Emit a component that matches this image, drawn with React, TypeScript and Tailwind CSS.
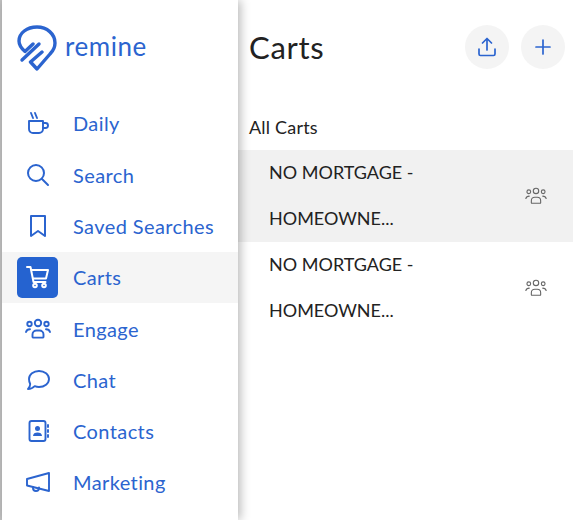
const brand = "#2b64cf";

const Coffee = () => (
  <svg width="26" height="26" viewBox="0 0 26 26" fill="none" stroke="currentColor" strokeWidth="1.9" strokeLinecap="round" strokeLinejoin="round">
    <path d="M4 11h14v8a4 4 0 0 1-4 4H8a4 4 0 0 1-4-4z" />
    <path d="M18 13h2.5a2.5 2.5 0 0 1 2.5 2.5v0a2.5 2.5 0 0 1-2.5 2.5H18" />
    <path d="M8 8 6 3M12 8 10 3" />
  </svg>
);

const Search = () => (
  <svg width="24" height="24" viewBox="0 0 24 24" fill="none" stroke="currentColor" strokeWidth="2" strokeLinecap="round">
    <circle cx="10" cy="10" r="8" />
    <path d="m16 16 6 6" />
  </svg>
);

const Bookmark = () => (
  <svg width="24" height="24" viewBox="0 0 24 24" fill="none" stroke="currentColor" strokeWidth="2" strokeLinejoin="round">
    <path d="M5 2h14v20l-7-5-7 5z" />
  </svg>
);

const Cart = () => (
  <svg width="26" height="26" viewBox="0 0 26 26" fill="none" stroke="currentColor" strokeWidth="2" strokeLinecap="round" strokeLinejoin="round">
    <path d="M2 3h3.5l3 15h12" />
    <path d="M6.5 6H23l-2 8.5H8" />
    <circle cx="10" cy="21.5" r="1.8" />
    <circle cx="19" cy="21.5" r="1.8" />
  </svg>
);

const People = ({ size = 26, width = 1.9 }: { size?: number; width?: number }) => (
  <svg width={size} height={size} viewBox="0 0 26 26" fill="none" stroke="currentColor" strokeWidth={width} strokeLinecap="round" strokeLinejoin="round">
    <circle cx="13" cy="7" r="3.2" />
    <circle cx="4.5" cy="8" r="2.2" />
    <circle cx="21.5" cy="8" r="2.2" />
    <path d="M7.5 21v-2.5a4 4 0 0 1 4-4h3a4 4 0 0 1 4 4V21a.8.8 0 0 1-.8.6H8.3a.8.8 0 0 1-.8-.6z" />
    <path d="M1 16c.5-1.700 2-2.800 4-2.800M25 16c-.5-1.700-2-2.800-4-2.800" />
  </svg>
);

const Chat = () => (
  <svg width="24" height="24" viewBox="0 0 24 24" fill="none" stroke="currentColor" strokeWidth="1.9" strokeLinejoin="round">
    <path d="M13 3c5.500 0 10 3.600 10 8s-4.500 8-10 8c-1.500 0-3-.3-4.300-.8C7 20 4.500 21 2 21c1.300-1.200 2.200-3 2.200-5C3.400 14.500 3 12.800 3 11c0-4.400 4.500-8 10-8z" />
  </svg>
);

const Contacts = () => (
  <svg width="24" height="24" viewBox="0 0 24 24" fill="none" stroke="currentColor" strokeWidth="1.9" strokeLinecap="round" strokeLinejoin="round">
    <rect x="3.500" y="2" width="16" height="20" rx="2" />
    <path d="M22 6v2M22 11v2M22 16v2" />
    <circle cx="11.500" cy="9.500" r="2.500" fill="currentColor" stroke="none" />
    <path d="M7 17c0-2.500 2-3.500 4.500-3.500S16 14.500 16 17z" fill="currentColor" stroke="none" />
  </svg>
);

const Megaphone = () => (
  <svg width="26" height="26" viewBox="0 0 26 26" fill="none" stroke="currentColor" strokeWidth="1.9" strokeLinecap="round" strokeLinejoin="round">
    <path d="M24 4v18L2 16.500V10z" />
    <path d="M8 18v1a3 3 0 0 0 6 0v-.5" />
  </svg>
);

const Upload = () => (
  <svg width="20" height="20" viewBox="0 0 20 20" fill="none" stroke="currentColor" strokeWidth="1.700" strokeLinecap="round" strokeLinejoin="round">
    <path d="M10 13V2M5.500 6 10 1.500 14.500 6" />
    <path d="M2 12v5a1.500 1.500 0 0 0 1.500 1.500h13A1.500 1.500 0 0 0 18 17v-5" />
  </svg>
);

const Plus = () => (
  <svg width="16" height="16" viewBox="0 0 16 16" fill="none" stroke="currentColor" strokeWidth="1.700" strokeLinecap="round">
    <path d="M8 1v14M1 8h14" />
  </svg>
);

const Logo = () => (
  <svg width="40" height="46" viewBox="0 0 40 46" fill="none" stroke={brand} strokeWidth="3.400" strokeLinecap="round" strokeLinejoin="round">
    <path d="M16 19 8 26.500C4 23 2 20 2 16 2 8 10 2 20 2c10 0 18 7 18 16 0 5-2 8-5 11L20 44l-6.500-7L25 27" />
    <path d="M5 35 22 19" />
  </svg>
);

const items = [
  { label: "Daily", icon: <Coffee /> },
  { label: "Search", icon: <Search /> },
  { label: "Saved Searches", icon: <Bookmark /> },
  { label: "Carts", icon: <Cart />, active: true },
  { label: "Engage", icon: <People /> },
  { label: "Chat", icon: <Chat /> },
  { label: "Contacts", icon: <Contacts /> },
  { label: "Marketing", icon: <Megaphone /> },
];

const App = () => {
  return (
    <div className="flex h-[520px] w-[573px] overflow-hidden bg-white font-['Lato',sans-serif]">
      <div className="w-[2px] shrink-0 bg-[#c4c4c4]" />
      <aside className="relative z-10 flex w-[236px] shrink-0 flex-col bg-white text-[#2b64cf] shadow-[2px_0_10px_rgba(0,0,0,0.3)]">
        <div className="flex h-[97.700px] items-center gap-[8px] pl-[15px] pb-[2px]">
          <Logo />
          <span className="pb-[3px] text-[26px] tracking-[0.55px]">remine</span>
        </div>
        {items.map((item) => (
          <div key={item.label} className={`flex h-[51.300px] shrink-0 items-center ${item.active ? "bg-[#f5f5f5]" : ""}`}>
            <div className="ml-[15px] flex size-[41px] items-center justify-center">
              {item.active ? (
                <div className="flex size-[41px] items-center justify-center rounded-[5px] bg-[#2563d0] text-white">{item.icon}</div>
              ) : (
                item.icon
              )}
            </div>
            <span className="ml-[15px] text-[20px] tracking-[0.4px]">{item.label}</span>
          </div>
        ))}
      </aside>
      <main className="min-w-0 flex-1 text-[#222]">
        <div className="flex h-[94px] items-center justify-between pl-[11px] pr-[8px]">
          <h1 className="text-[31px] tracking-[0.7px]">Carts</h1>
          <div className="flex gap-[12px] text-[#2b64cf]">
            <button className="flex size-[44px] items-center justify-center rounded-full bg-[#f4f4f4]"><Upload /></button>
            <button className="flex size-[44px] items-center justify-center rounded-full bg-[#f4f4f4]"><Plus /></button>
          </div>
        </div>
        <div className="flex h-[56px] items-center pl-[11px] pt-[10px] text-[18px] tracking-[0.2px]">All Carts</div>
        {[true, false].map((selected, i) => (
          <div key={i} className={`flex h-[92px] items-center justify-between pl-[31px] pr-[26px] ${selected ? "bg-[#f1f1f1]" : ""}`}>
            <div className="pb-[2px] text-[18px] leading-[46px]">
              NO MORTGAGE -<br />HOMEOWNE...
            </div>
            <span className="text-[#666]"><People size={22} width={1.300} /></span>
          </div>
        ))}
      </main>
    </div>
  );
};

export default App;
